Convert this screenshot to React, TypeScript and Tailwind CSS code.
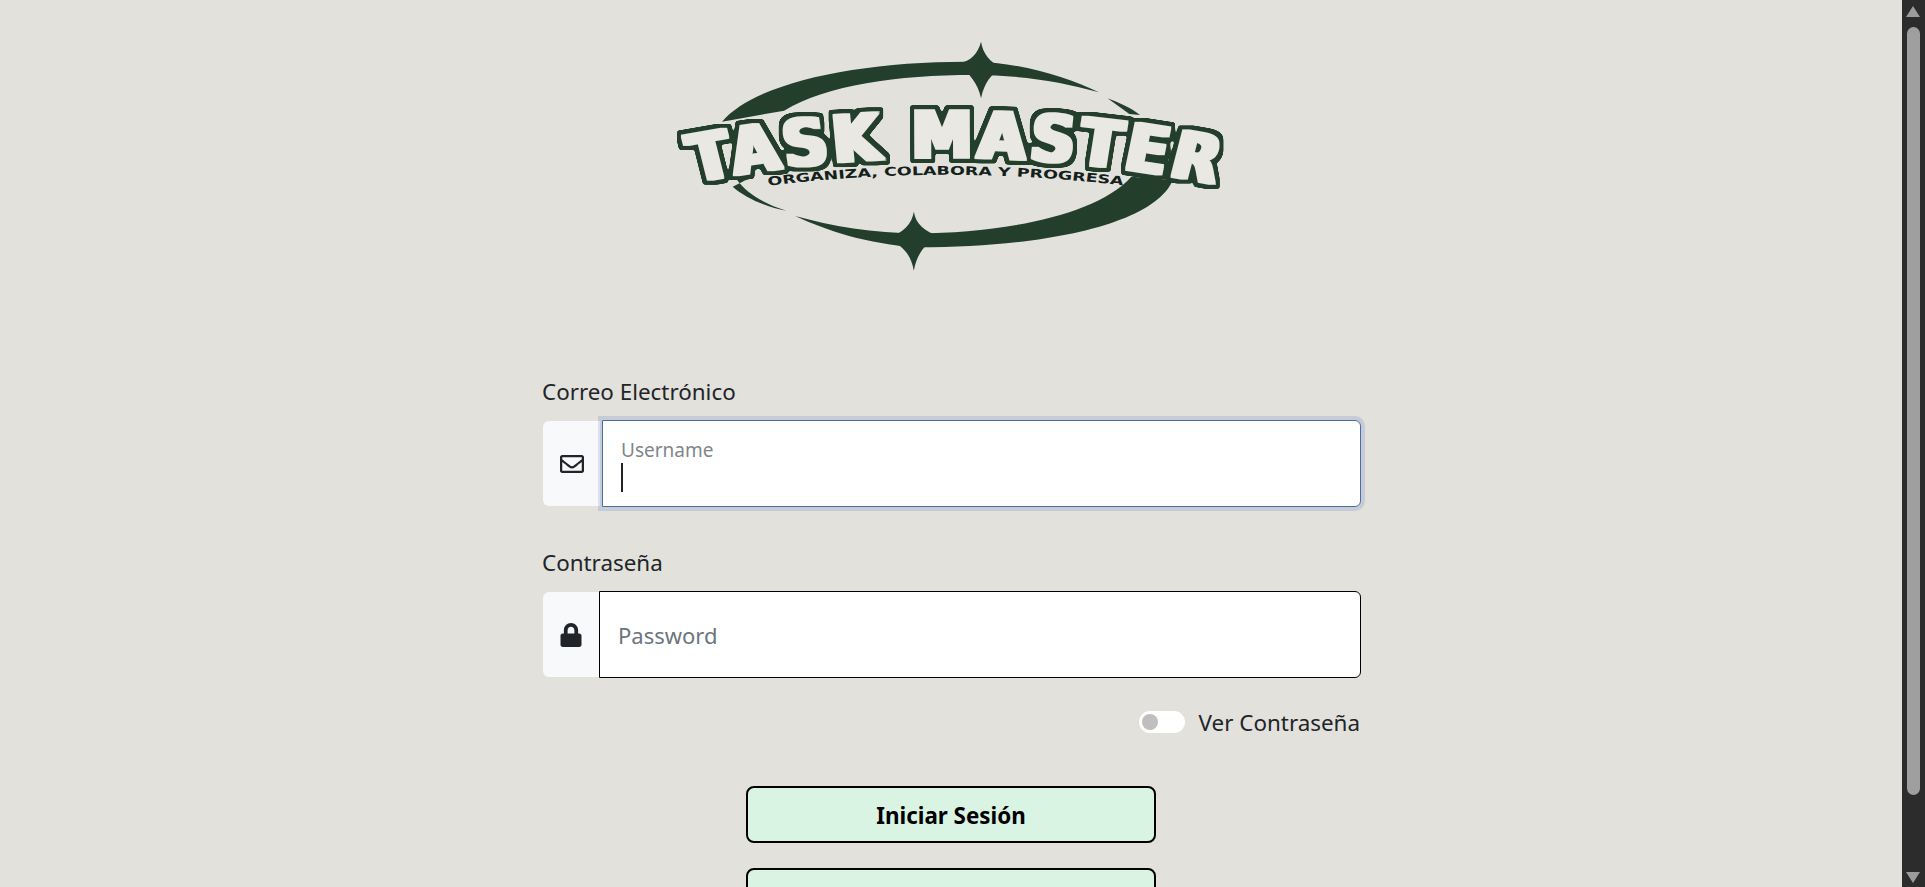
import { FaLock, FaRegEnvelope } from "react-icons/fa";

const GREEN = "#233f2b";
const PAPER = "#e9e8e3";

function Logo() {
  return (
    <svg viewBox="0 0 1568 780" preserveAspectRatio="none" className="mx-auto block h-[260px] w-[620px]">
      {/* ring */}
      <path fill={GREEN} d="M205 305 C290 185 560 122 840 125 C960 127 1075 170 1158 217 C1060 183 950 165 840 165 C650 165 470 195 362 272 Z" />
      <path fill={GREEN} d="M1180 235 C1210 248 1240 265 1262 285 L1235 282 Z" />
      <path fill={GREEN} d="M1345 480 C1300 610 1030 682 700 682 C570 672 470 632 390 588 C480 618 590 640 700 640 C900 640 1150 590 1240 470 Z" />
      <path fill={GREEN} d="M240 475 C265 520 310 550 368 572 C320 562 265 535 232 500 L290 465 Z" />
      {/* stars */}
      <path fill={GREEN} d="M860 65 C865 100 880 125 915 145 C885 160 868 190 860 235 C852 190 830 160 800 130 C835 125 852 100 860 65 Z" />
      <path fill={GREEN} d="M690 575 C695 610 715 635 760 650 C720 665 698 700 690 752 C682 700 660 675 620 655 C665 640 685 610 690 575 Z" />
      <defs>
        <path id="title-curve" d="M137 488 Q799 335 1471 498" />
        <path id="tag-curve" d="M322 497 Q770 432 1225 497" />
        {/* fattens the letters and puts a rounded outline behind them */}
        <filter id="chunky" x="-5%" y="-30%" width="110%" height="160%" colorInterpolationFilters="sRGB">
          <feMorphology in="SourceAlpha" operator="dilate" radius="18 16" result="fat" />
          <feGaussianBlur in="fat" stdDeviation="3" result="soft" />
          <feComponentTransfer in="soft" result="outer">
            <feFuncA type="linear" slope="6" intercept="-2.5" />
          </feComponentTransfer>
          <feFlood floodColor={GREEN} />
          <feComposite in2="outer" operator="in" result="outline" />
          <feMorphology in="SourceAlpha" operator="dilate" radius="8 4" result="body" />
          <feFlood floodColor={PAPER} />
          <feComposite in2="body" operator="in" result="letters" />
          <feMerge>
            <feMergeNode in="outline" />
            <feMergeNode in="letters" />
          </feMerge>
        </filter>
      </defs>
      <text
        fontFamily="'DejaVu Sans', sans-serif"
        fontWeight="700"
        fontSize="196"
        letterSpacing="14"
        fill={PAPER}
        filter="url(#chunky)"
      >
        <textPath href="#title-curve" textLength="1335" lengthAdjust="spacingAndGlyphs">TASK MASTER</textPath>
      </text>
      <text fontFamily="'DejaVu Sans', sans-serif" fontWeight="700" fontSize="36" fill="#14201a">
        <textPath href="#tag-curve" textLength="900" lengthAdjust="spacingAndGlyphs">ORGANIZA, COLABORA Y PROGRESA</textPath>
      </text>
    </svg>
  );
}

function IconBox({ children, width }: { children: React.ReactNode; width: string }) {
  return (
    <div className={`flex shrink-0 items-center justify-center rounded-l-md bg-[#f8f9fa] text-[#212529] ${width}`}>
      {children}
    </div>
  );
}

function Scrollbar() {
  return (
    <div className="flex h-full w-[23px] shrink-0 flex-col items-center bg-[#2c2c2c] pr-[1px]">
      <svg width="16" height="12" viewBox="0 0 16 12" className="mt-[6px] shrink-0">
        <path d="M8 0 L15 11 L1 11 Z" fill="#9c9c9c" />
      </svg>
      <div className="mt-[9px] h-[768px] w-[13px] shrink-0 rounded-full bg-[#9f9f9f]" />
      <svg width="16" height="12" viewBox="0 0 16 12" className="mt-[76px] shrink-0">
        <path d="M1 1 L15 1 L8 12 Z" fill="#9c9c9c" />
      </svg>
    </div>
  );
}

export default function App() {
  return (
    <div className="flex h-screen overflow-hidden bg-[#e2e1dc] font-['Noto_Sans','Open_Sans',sans-serif] text-[#212529]">
      <main className="h-full min-w-0 flex-1 overflow-hidden pt-5">
        <Logo />

        <form className="mx-auto mt-[97px] w-[820px]">
          <label className="mb-[13px] block pl-[1px] text-[22.4px] leading-[30px]">Correo Electrónico</label>
          <div className="flex h-[87px] pl-[2px]">
            <IconBox width="my-[1px] w-[57px]"><FaRegEnvelope size={24} /></IconBox>
            <div className="ml-[2px] flex flex-1 flex-col rounded-r-md border border-[#4a6da7] bg-white pt-[16px] pl-[18px] shadow-[0_0_0_4px_rgba(13,70,180,0.13)]">
              <span className="text-[19px] leading-[26px] text-[#80868b]">Username</span>
              <span className="h-[29px] w-[2px] bg-[#212529]" />
            </div>
          </div>

          <label className="mt-[41px] mb-[13px] block pl-[1px] text-[22.4px] leading-[30px]">Contraseña</label>
          <div className="flex h-[87px] pl-[2px]">
            <IconBox width="my-[1px] w-[56px]"><FaLock size={24} /></IconBox>
            <input
              type="password"
              placeholder="Password"
              className="min-w-0 flex-1 rounded-r-md border border-black bg-white pt-[2px] pl-[18px] text-[22px] outline-none placeholder:text-[#6c757d]"
            />
          </div>

          <div className="mt-[28px] flex items-center justify-end gap-[14px] pr-[1px]">
            <span className="flex h-[22px] w-[46px] items-center rounded-full bg-white pl-[3px]">
              <span className="h-[16px] w-[16px] rounded-full bg-[#bfbfbf]" />
            </span>
            <span className="pt-[2px] text-[22.4px] leading-[30px]">Ver Contraseña</span>
          </div>

          <div className="mt-[48px] flex flex-col items-center gap-[25px]">
            <button type="button" className="h-[57px] w-[410px] rounded-lg border-2 border-black bg-[#d9f4e3] pt-[2px] text-[22.4px] font-bold text-black">
              Iniciar Sesión
            </button>
            <button type="button" className="h-[57px] w-[410px] shrink-0 rounded-lg border-2 border-black bg-[#d9f4e3]" />
          </div>
        </form>
      </main>
      <Scrollbar />
    </div>
  );
}
